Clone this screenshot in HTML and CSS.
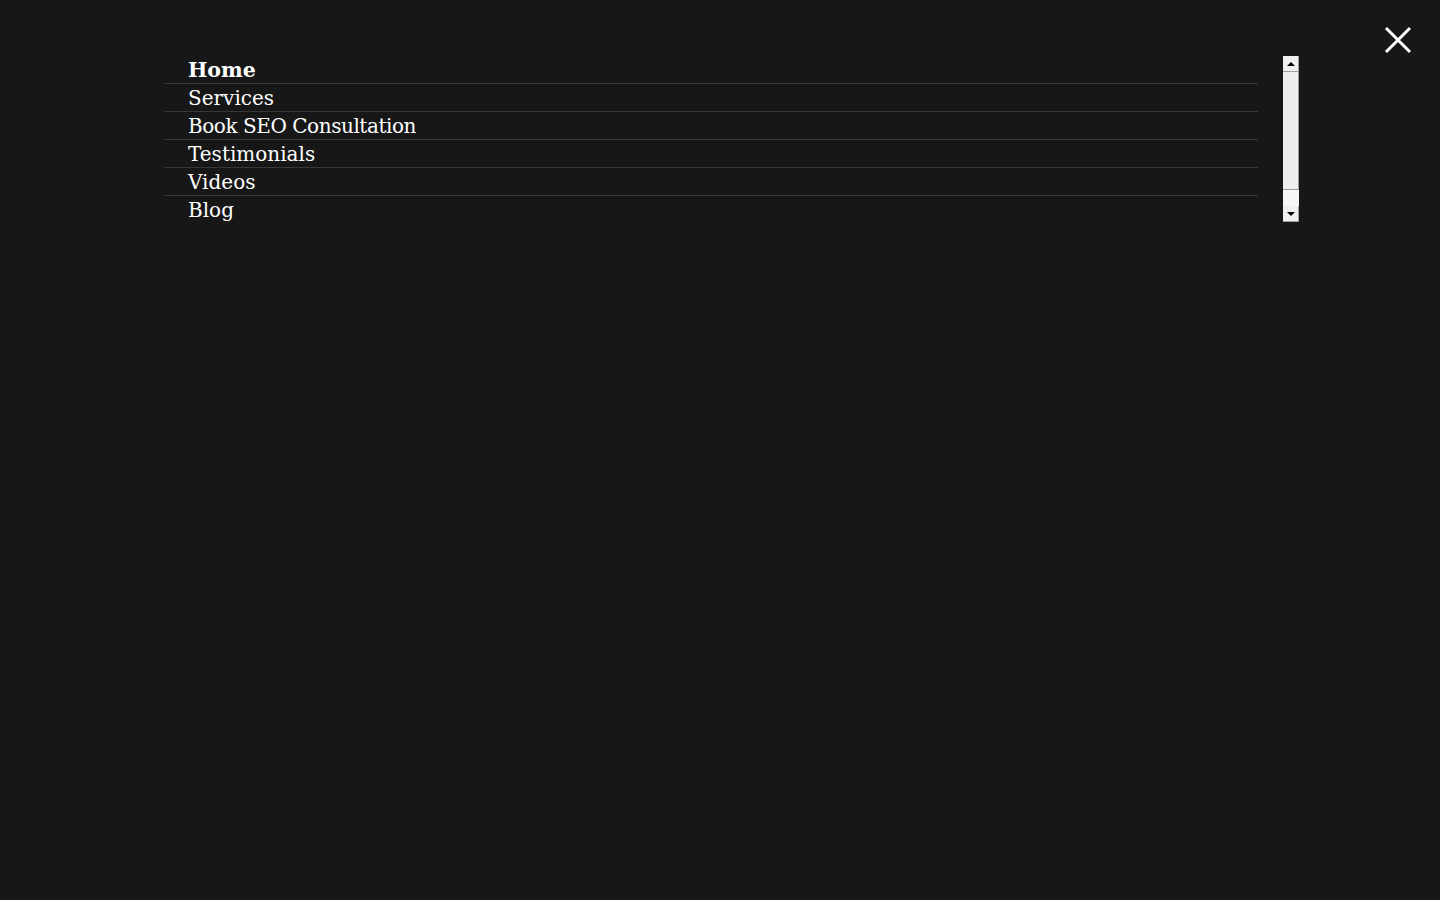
FILE: index.html
```html
<!DOCTYPE html>
<html lang="en">
<head>
<meta charset="utf-8">
<title>Menu</title>
<link rel="stylesheet" href="styles.css">
</head>
<body>
<div class="overlay">
  <div class="menu-wrap">
    <nav class="menu">
      <a class="item active" href="#">Home</a>
      <a class="item" href="#">Services</a>
      <a class="item caps" href="#">Book SEO Consultation</a>
      <a class="item" href="#">Testimonials</a>
      <a class="item" href="#">Videos</a>
      <a class="item" href="#">Blog</a>
    </nav>
    <div class="scrollbar">
      <div class="sb-btn"><span class="tri up"></span></div>
      <div class="sb-thumb"></div>
      <div class="sb-track"></div>
      <div class="sb-btn"><span class="tri down"></span></div>
    </div>
  </div>
  <button class="close" aria-label="Close">
    <svg width="28" height="28" viewBox="0 0 28 28"><path d="M2 2 L26 26 M26 2 L2 26" stroke="#fff" stroke-width="3" fill="none"/></svg>
  </button>
</div>
</body>
</html>
```
FILE: styles.css
```css
html, body { margin: 0; padding: 0; }
body { background: #171717; width: 1440px; height: 900px; overflow: hidden; }
.overlay { display: flex; padding: 56px 0 0 164px; }
.menu-wrap { display: flex; gap: 25px; align-items: flex-start; }
.menu { display: flex; flex-direction: column; width: 1094px; }
.item {
  display: block;
  height: 26px;
  padding: 1px 0 0 24px;
  font-family: "DejaVu Serif", "Liberation Serif", serif;
  font-size: 20px;
  line-height: 27px;
  color: #fff;
  text-decoration: none;
  border-bottom: 1px solid #383838;
}
.item:last-child { border-bottom: none; }
.item.active { font-weight: bold; font-size: 20.5px; }
.item.caps { letter-spacing: -0.45px; }
.scrollbar { width: 16px; height: 166px; display: flex; flex-direction: column; background: #f0f0f0; }
.sb-btn { height: 16px; box-sizing: border-box; background: #f0f0f0; border-right: 1px solid #a0a0a0; border-bottom: 1px solid #a0a0a0; display: flex; align-items: center; justify-content: center; }
.sb-thumb { height: 118px; box-sizing: border-box; background: #efefef; border-right: 1px solid #9a9a9a; border-bottom: 1px solid #9a9a9a; }
.sb-track { flex: 1; background: #f7f7f7; }
.tri { width: 0; height: 0; border-left: 4px solid transparent; border-right: 4px solid transparent; }
.tri.up { border-bottom: 4px solid #000; }
.tri.down { border-top: 4px solid #000; }
.close { position: absolute; top: 26px; left: 1384px; background: none; border: 0; padding: 0; width: 28px; height: 28px; cursor: pointer; }
.close svg { display: block; }
```
